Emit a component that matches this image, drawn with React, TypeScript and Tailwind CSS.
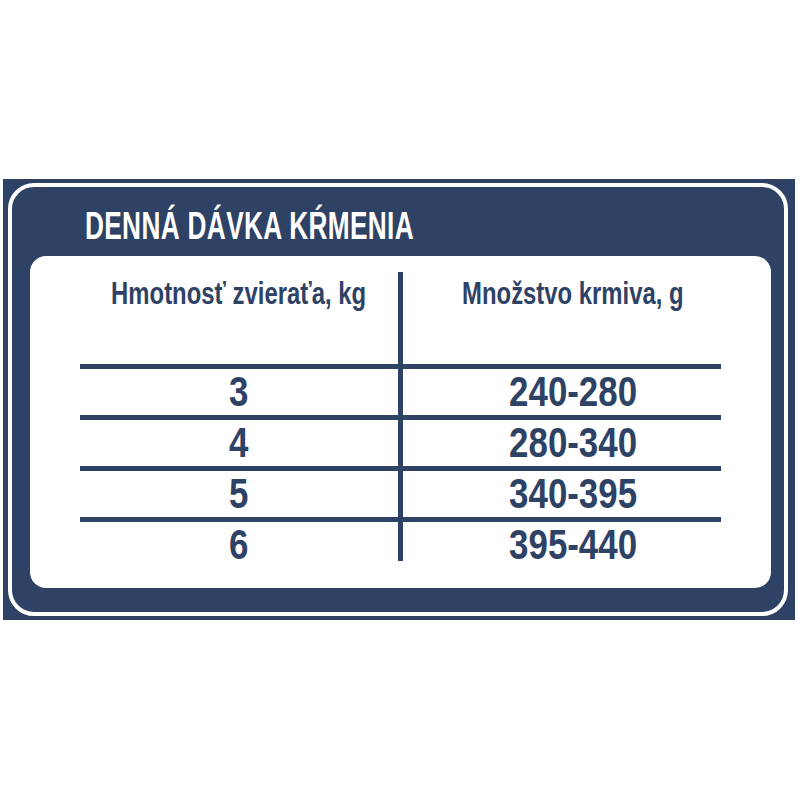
import React from "react";

const NAVY = "bg-[#2e4265]";

function Column({
  header,
  values,
  shift,
}: {
  header: string;
  values: string[];
  shift?: boolean;
}) {
  return (
    <div className="flex w-[318px] flex-col">
      <div className={`flex h-[92px] justify-center pt-[4px] ${shift ? "pl-[22px]" : ""}`}>
        <span className="inline-block scale-x-[0.77] whitespace-nowrap text-[31px] leading-[36px] font-bold text-[#2e4265]">
          {header}
        </span>
      </div>
      {values.map((v, i) => (
        <React.Fragment key={v}>
          <div className={`h-[5px] ${NAVY}`} />
          <div
            className={`flex justify-center ${
              i === values.length - 1 ? "h-[39px] items-start" : "h-[46px] items-center"
            } ${shift ? "pl-[22px]" : ""}`}
          >
            <span className="inline-block scale-x-[0.83] whitespace-nowrap text-[42px] leading-[46px] font-bold text-[#2e4265]">
              {v}
            </span>
          </div>
        </React.Fragment>
      ))}
    </div>
  );
}

export default function App() {
  return (
    <div
      className="h-[800px] w-[800px] bg-white pt-[179px] pl-[3px]"
      style={{ fontFamily: '"Liberation Sans", Arial, sans-serif' }}
    >
      <div className={`h-[441px] w-[792px] ${NAVY} pt-[4px] pr-[7px] pb-[4px] pl-[5px]`}>
        <div className="flex h-full w-full flex-col rounded-[26px] border-[4px] border-white pr-[13px] pb-[24px] pl-[18px]">
          <div className="flex h-[69px] items-center pl-[55px] pt-[8px]">
            <span className="inline-block origin-left scale-x-[0.69] whitespace-nowrap text-[38px] leading-none font-bold tracking-[0.5px] text-white">
              DENNÁ DÁVKA KŔMENIA
            </span>
          </div>
          <div className="flex-1 rounded-[16px] bg-white pl-[50px] pt-[16px]">
            <div className="flex">
              <Column header="Hmotnosť zvieraťa, kg" values={["3", "4", "5", "6"]} />
              <div className={`w-[5px] ${NAVY}`} />
              <Column
                header="Množstvo krmiva, g"
                values={["240-280", "280-340", "340-395", "395-440"]}
                shift
              />
            </div>
          </div>
        </div>
      </div>
    </div>
  );
}
